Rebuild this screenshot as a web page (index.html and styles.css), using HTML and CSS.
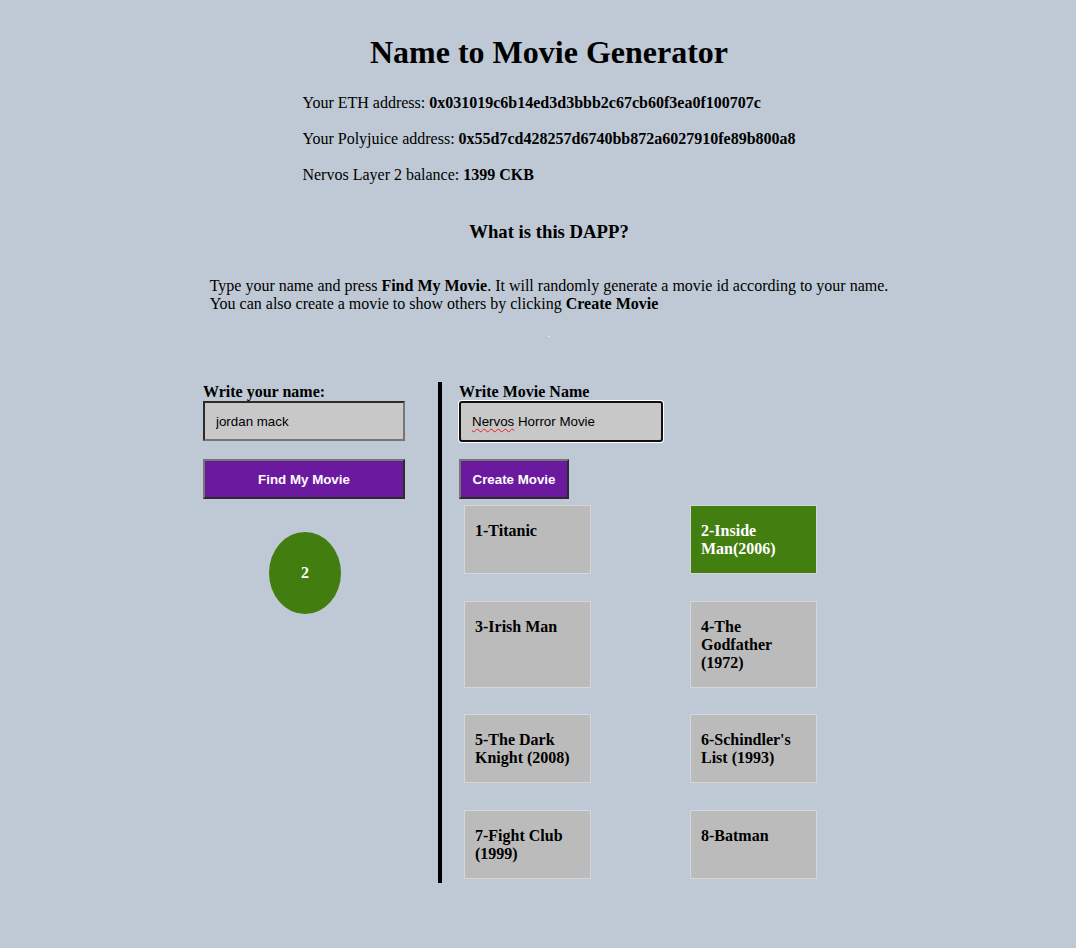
FILE: index.html
```html
<!DOCTYPE html>
<html lang="en">
<head>
<meta charset="utf-8">
<title>Name to Movie Generator</title>
<link rel="stylesheet" href="styles.css">
</head>
<body>
<div class="page">
  <h1 class="title">Name to Movie Generator</h1>
  <div class="info">
    <p>Your ETH address: <b>0x031019c6b14ed3d3bbb2c67cb60f3ea0f100707c</b></p>
    <p>Your Polyjuice address: <b>0x55d7cd428257d6740bb872a6027910fe89b800a8</b></p>
    <p>Nervos Layer 2 balance: <b>1399 CKB</b></p>
  </div>
  <h3 class="subtitle">What is this DAPP?</h3>
  <p class="desc">Type your name and press <b>Find My Movie</b>. It will randomly generate a movie id according to your name.<br>You can also create a movie to show others by clicking <b>Create Movie</b></p>
  <div class="dot"></div>
  <div class="workspace">
    <div class="left-col">
      <label class="label" for="name">Write your name:</label>
      <input id="name" class="field" type="text" value="jordan mack">
      <button class="btn btn-wide" type="button">Find My Movie</button>
      <div class="result">2</div>
    </div>
    <div class="right-col">
      <div class="label">Write Movie Name</div>
      <div class="field field-focus" role="textbox"><span class="misspelled">Nervos</span>&nbsp;Horror Movie</div>
      <button class="btn btn-create" type="button">Create Movie</button>
      <div class="cards">
        <div class="card">1-Titanic</div>
        <div class="card card-active">2-Inside Man(2006)</div>
        <div class="card">3-Irish Man</div>
        <div class="card">4-The Godfather (1972)</div>
        <div class="card">5-The Dark Knight (2008)</div>
        <div class="card">6-Schindler's List (1993)</div>
        <div class="card">7-Fight Club (1999)</div>
        <div class="card">8-Batman</div>
      </div>
    </div>
  </div>
</div>
</body>
</html>
```
FILE: styles.css
```css
html, body {
  margin: 0;
  padding: 0;
  background: #bec9d5;
}
body {
  font-family: "Liberation Serif", "Times New Roman", serif;
  font-size: 16px;
  color: #000;
}
.page {
  padding: 34px 0 60px 22px;
}
.title {
  margin: 0 0 22px;
  font-size: 32px;
  font-weight: bold;
  text-align: center;
  line-height: normal;
}
.info {
  width: fit-content;
  margin: 0 auto;
}
.info p {
  margin: 0 0 16px;
  line-height: 20px;
}
.info p:last-child {
  margin-bottom: 0;
}
.subtitle {
  margin: 36px 0 34px;
  font-size: 18.72px;
  text-align: center;
  line-height: normal;
}
.desc {
  width: fit-content;
  margin: 0 auto;
  line-height: normal;
}
.dot {
  width: 2px;
  height: 1px;
  margin: 23px auto 0;
  background: #e4e6e8;
}
.workspace {
  display: flex;
  width: 692px;
  margin: 45px auto 0;
}
.left-col {
  width: 202px;
  margin-right: 33px;
  flex: none;
}
.right-col {
  flex: 1;
  border-left: 4px solid #000;
  padding-left: 17px;
  padding-bottom: 4px;
}
.label {
  display: block;
  font-weight: bold;
  line-height: 18px;
  padding-top: 1px;
  margin-bottom: 0;
}
.field {
  display: block;
  box-sizing: border-box;
  width: 202px;
  height: 40px;
  margin: 0;
  padding: 0 0 0 11px;
  background: #c8c8c8;
  border: 2px solid;
  border-color: #2b2b2b #767676 #767676 #2b2b2b;
  font-family: "Liberation Sans", Arial, sans-serif;
  font-size: 13.33px;
  color: #000;
  outline: none;
}
.field-focus {
  width: 204px;
  height: 41px;
  line-height: 37px;
  border: 2px solid #101010;
  border-radius: 3px;
  box-shadow: 0 0 0 1px #fff;
}
.misspelled {
  text-decoration: underline wavy #e02020;
  text-decoration-thickness: 1px;
  text-underline-offset: 2px;
}
.btn {
  display: block;
  box-sizing: border-box;
  height: 40px;
  margin: 18px 0 0;
  padding: 0 12px;
  background: #6b1a9f;
  color: #fff;
  font-family: "Liberation Sans", Arial, sans-serif;
  font-size: 13.33px;
  font-weight: bold;
  border: 2px solid;
  border-color: #767676 #2b2b2b #2b2b2b #767676;
}
.btn-wide {
  width: 202px;
}
.btn-create {
  margin-top: 17px;
  width: 110px;
  padding: 0;
}
.result {
  width: 72px;
  height: 82px;
  margin: 33px 0 0 66px;
  border-radius: 50%;
  background: #427d0f;
  color: #fff;
  font-weight: bold;
  display: flex;
  align-items: center;
  justify-content: center;
}
.cards {
  display: grid;
  grid-template-columns: 127px 127px;
  column-gap: 99px;
  row-gap: 26.5px;
  margin: 6px 0 0 5px;
}
.card {
  box-sizing: border-box;
  width: 127px;
  padding: 16px 10px 15px;
  background: #bbbbbb;
  border: 1px solid #d4d6d8;
  font-weight: bold;
  line-height: 18px;
}
.card-active {
  background: #437e10;
  color: #fff;
}
```
